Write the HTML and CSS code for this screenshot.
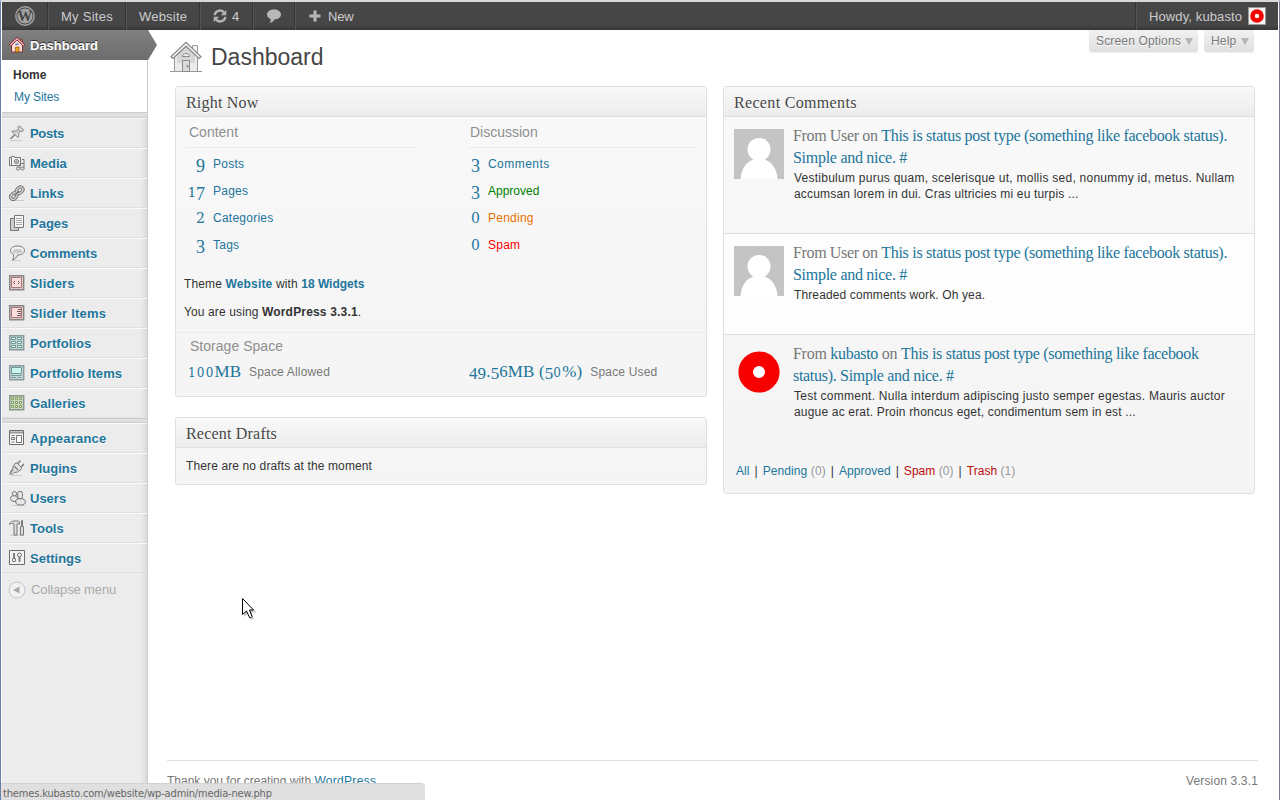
FILE: index.html
```html
<!DOCTYPE html>
<html lang="en">
<head>
<meta charset="utf-8">
<title>Dashboard</title>
<link rel="stylesheet" href="styles.css">
</head>
<body>
<div class="screen">
  <header class="bar">
    <div class="bar-item logo"><svg width="20" height="20" viewBox="0 0 20 20"><circle cx="10" cy="10" r="9.2" fill="none" stroke="#a2a2a2" stroke-width="1.4"/><circle cx="10" cy="10" r="7.6" fill="#a2a2a2"/><text x="10" y="15" text-anchor="middle" textLength="15" lengthAdjust="spacingAndGlyphs" class="logo-w">W</text></svg></div>
    <div class="bar-item sites">My Sites</div>
    <div class="bar-item website">Website</div>
    <div class="bar-item updates"><svg width="16" height="14" viewBox="0 0 16 14"><g fill="none" stroke="#b4b4b4" stroke-width="2.4"><path d="M2.6 6.2A5.3 5.3 0 0 1 11.8 3.4"/><path d="M13.4 7.8A5.3 5.3 0 0 1 4.2 10.6"/></g><path d="M14.3 0.8V6.2H8.8ZM1.7 13.2V7.8H7.2Z" fill="#b4b4b4"/></svg><span>4</span></div>
    <div class="bar-item bubble"><svg width="16" height="14" viewBox="0 0 16 14"><path d="M8 .5C12 .5 15 2.6 15 5.6S12 10.5 8.300 10.500C7.500 12.500 6 13.500 3.500 13.800C4.500 12.700 4.800 11.500 4.600 10C2.400 9.200 1 7.600 1 5.600C1 2.600 4 .5 8 .5Z" fill="#b8b8b8"/></svg></div>
    <div class="bar-item new"><svg width="12" height="12" viewBox="0 0 12 12"><path d="M6 .5V11.500M.5 6H11.500" stroke="#b8b8b8" stroke-width="3"/></svg><span>New</span></div>
    <div class="bar-item account"><span>Howdy, kubasto</span><svg width="18" height="18" viewBox="0 0 18 18"><rect x=".5" y=".5" width="17" height="17" fill="#f4f4f4" stroke="#999"/><circle cx="9" cy="9" r="4.500" fill="none" stroke="#f60000" stroke-width="4.600"/></svg></div>
  </header>

  <div class="body">
    <nav class="menu">
      <a class="current"><svg class="ic" viewBox="0 0 16 16"><path d="M11.500 2h2v4h-2z" fill="#d99" stroke="#633" stroke-width=".7"/><path d="M2.500 8L8 2.800 13.500 8V15H2.500Z" fill="#ffd9d5" stroke="#7d3434"/><path d="M.6 8.600L8 1.500 15.400 8.600" fill="none" stroke="#6e2630" stroke-width="2.600"/><path d="M1 8.200L8 1.700 15 8.200" fill="none" stroke="#f6b9b5" stroke-width="1.300"/><path d="M6.500 10h3.500v5H6.500z" fill="#e8a51c" stroke="#8b5217" stroke-width=".7"/><path d="M6.500 7.300h3" stroke="#347fc0" stroke-width="1.400"/></svg><span>Dashboard</span></a>
      <div class="submenu"><b>Home</b><a>My Sites</a></div>
      <div class="sep first"></div>
      <a class="row"><svg class="ic" viewBox="0 0 16 16"><path d="M1 15.500h12" stroke="#ccc"/><path d="M1.500 14L6 9.500" stroke="#777" stroke-width="1.300"/><path d="M3 6.500C4.500 5.500 6 6 7 6.500L9.500 3.800 9 2 10.500 1 14.500 5 13.500 6.300 11.700 6 9.300 8.500C10 10 10 11 9 12.500Z" fill="#e2e2e2" stroke="#777"/><path d="M8 7.500L11 4.500" stroke="#999"/></svg><span class="w0">Posts</span></a>
      <a class="row"><svg class="ic" viewBox="0 0 16 16"><g fill="none" stroke="#777"><path d="M.5 2.500h2v-1h3v1h6v8H.5Z" fill="#f4f4f4"/><path d="M2.500 3v7"/><circle cx="7.500" cy="6.500" r="2.200"/><circle cx="7.500" cy="6.500" r=".7"/><path d="M13 4.500h2v9M11 13V8.500h4"/><circle cx="9" cy="13.500" r="1.600"/><circle cx="13.500" cy="13.500" r="1.600"/></g></svg><span>Media</span></a>
      <a class="row"><svg class="ic" viewBox="0 0 16 16"><path d="M2 15.500h13" stroke="#ccc"/><g fill="none" stroke="#6f6f6f" stroke-width="3.200"><rect x="8.200" y="1.700" width="5" height="7" rx="2.500" transform="rotate(45 10.700 5.200)"/><rect x="2.300" y="7.700" width="5" height="7" rx="2.500" transform="rotate(45 4.800 11.200)"/></g><g fill="none" stroke="#d5d5d5" stroke-width="1.400"><rect x="8.200" y="1.700" width="5" height="7" rx="2.500" transform="rotate(45 10.700 5.200)"/><rect x="2.300" y="7.700" width="5" height="7" rx="2.500" transform="rotate(45 4.800 11.200)"/></g><path d="M5.500 10.500L10 6" stroke="#777" stroke-width="1.600"/></svg><span>Links</span></a>
      <a class="row"><svg class="ic" viewBox="0 0 16 16"><path d="M1.500 3.500h8v12h-8z" fill="#ccc" stroke="#777"/><path d="M5.500 .5h9v12h-9z" fill="#f7f7f7" stroke="#777"/><path d="M7 3.500h6M7 5.500h6M7 7.500h6M7 9.500h6" stroke="#aaa"/></svg><span>Pages</span></a>
      <a class="row"><svg class="ic" viewBox="0 0 16 16"><path d="M3 15.500h9" stroke="#ccc"/><path d="M8.500 1C12.500 1 15.500 2.800 15.500 5.500S12.500 10 8.500 10C8 12.500 6 14 3.500 15C4.700 13.500 5 12 4.700 9.400C2.700 8.600 1.500 7.200 1.500 5.500C1.500 2.800 4.500 1 8.500 1Z" fill="#f0f0f0" stroke="#777"/><ellipse cx="8.500" cy="6.300" rx="5" ry="2.200" fill="#ccc"/></svg><span>Comments</span></a>
      <a class="row"><svg class="ic" viewBox="0 0 16 16"><path d="M.7.7h14v14H.7z" fill="#e0c7c7" stroke="#878787" stroke-width="1.400"/><path d="M2.500 2.500h10v10h-10z" fill="#f9dcdc" stroke="#a77"/><path d="M6 6L4.500 7.500 6 9M9 6L10.500 7.500 9 9" fill="none" stroke="#755"/></svg><span class="w2">Sliders</span></a>
      <a class="row"><svg class="ic" viewBox="0 0 16 16"><path d="M.7.7h14v14H.7z" fill="#e0c7c7" stroke="#878787" stroke-width="1.400"/><path d="M2.500 2.500h10v10h-10z" fill="#f9dcdc" stroke="#a77"/><path d="M9 4.500h3M8 6.500h4M9 8.500h3M8 10.500h4" stroke="#755"/></svg><span class="w2">Slider Items</span></a>
      <a class="row"><svg class="ic" viewBox="0 0 16 16"><path d="M.7.7h14v14H.7z" fill="#bfd3d0" stroke="#8a9a9a" stroke-width="1.400"/><path d="M2.500 2.500h4v2h-4zM8.500 2.500h4v2h-4zM2.500 6.500h4v2h-4zM8.500 6.500h4v2h-4zM2.500 10.500h4v2h-4zM8.500 10.500h4v2h-4z" fill="#e8fbf6" stroke="#6b9995"/></svg><span class="w1">Portfolios</span></a>
      <a class="row"><svg class="ic" viewBox="0 0 16 16"><path d="M.7.7h14v14H.7z" fill="#c5d8d5" stroke="#8a9a9a" stroke-width="1.400"/><path d="M2.500 2.500h10v6h-10z" fill="#c9f5ec" stroke="#6b9995"/><path d="M2 10.500h11M2 12.500h5M8.500 12.500h4" stroke="#7b9f9c"/></svg><span class="w1">Portfolio Items</span></a>
      <a class="row last"><svg class="ic" viewBox="0 0 16 16"><path d="M.7.7h14v14H.7z" fill="#cbd5c2" stroke="#8d968a" stroke-width="1.400"/><path d="M2.500 2.500h2v2h-2zM6.500 2.500h2v2h-2zM10.500 2.500h2v2h-2zM2.500 6.500h2v2h-2zM6.500 6.500h2v2h-2zM10.500 6.500h2v2h-2zM2.500 10.500h2v2h-2zM6.500 10.500h2v2h-2zM10.500 10.500h2v2h-2z" fill="#eefbdd" stroke="#7ea05f"/></svg><span class="w1">Galleries</span></a>
      <div class="sep"></div>
      <a class="row"><svg class="ic" viewBox="0 0 16 16"><path d="M.5 .5h14v14H.5z" fill="#f4f4f4" stroke="#6c6c6c"/><path d="M1 2.500h13" stroke="#999" stroke-width="2"/><path d="M7.500 5.500h5v7h-5z" fill="#fff" stroke="#777"/><path d="M2.500 5.500h3M2.500 7.500h3v2h-3zM2.500 12h3" fill="none" stroke="#777"/></svg><span class="w2">Appearance</span></a>
      <a class="row"><svg class="ic" viewBox="0 0 16 16"><path d="M2 15.500h11" stroke="#ccc"/><path d="M.5 14.500C3 12.500.5 11 3.500 9.500" fill="none" stroke="#777" stroke-width="1.300"/><path d="M4 7L6 3.500 8 3 12.500 7.500 12 9.500 8.500 12 5 12.500 3 14.500 1.500 13 3.700 10.700Z" fill="#e4e4e4" stroke="#777"/><path d="M8.500 3.500L11.500 .7M12 7L15 4M5.500 6.500L9 10" stroke="#777" stroke-width="1.400"/></svg><span>Plugins</span></a>
      <a class="row"><svg class="ic wide-ic" viewBox="0 0 17 16"><path d="M3 15.500h13" stroke="#ccc"/><g fill="#e6e6e6" stroke="#777"><ellipse cx="5" cy="8.500" rx="3.600" ry="3"/><circle cx="5.500" cy="3.700" r="2.200"/><ellipse cx="11.500" cy="11.800" rx="4.800" ry="3.200"/><rect x="8.700" y="1.300" width="4.800" height="7.500" rx="2.400"/></g></svg><span>Users</span></a>
      <a class="row"><svg class="ic" viewBox="0 0 16 16"><path d="M1 15.500h14" stroke="#ccc"/><path d="M.5 4.500C1.500 1.500 3 1 5 1H9L10.500 2V4H8V15H5V4C3 3 2 3.500 .5 4.500Z" fill="#ddd" stroke="#777"/><path d="M12.500 .5h1v6h1v8.500h-3V6.500h1Z" fill="#ddd" stroke="#777"/></svg><span>Tools</span></a>
      <a class="row"><svg class="ic" viewBox="0 0 16 16"><path d="M.5 .5h15v14H.5z" fill="#f2f2f2" stroke="#6c6c6c"/><path d="M5 3v6M10.500 7v5" stroke="#777" stroke-width="1.800"/><circle cx="5" cy="10" r="1.700" fill="#fff" stroke="#666"/><circle cx="10.500" cy="5" r="1.900" fill="#fff" stroke="#666"/></svg><span>Settings</span></a>
      <a class="collapse"><svg width="18" height="18" viewBox="0 0 18 18"><circle cx="9" cy="9" r="8" fill="#f1f1f1" stroke="#c5c5c5"/><path d="M11.500 5.500V12.500L5 9Z" fill="#aaa"/></svg><span>Collapse menu</span></a>
    </nav>

    <main class="main">
      <div class="top">
        <svg class="house" width="32" height="32" viewBox="0 0 32 32"><path d="M0 30.500h32" stroke="#999"/><path d="M22.500 4.500h5v8h-5z" fill="#f4f4f4" stroke="#999"/><path d="M4.500 14L16 4 27.500 14V30.500H4.500Z" fill="#ececec" stroke="#999"/><path d="M7 13.500L16 6l9 7.500V22H7Z" fill="#d6d6d6"/><path d="M1 15.800L16 1.300 31 15.800 29 17.500 16 5.200 3 17.500Z" fill="#fafafa" stroke="#868686" stroke-width="1.200"/><path d="M12.500 15.500C12.500 11.500 19.500 11.500 19.500 15.500Z" fill="#eee" stroke="#888"/><path d="M12.500 19.500h7v11h-7z" fill="#dcdcdc" stroke="#888"/><path d="M16.500 24h2v2.500h-2z" fill="#999"/></svg>
        <h1>Dashboard</h1>
        <div class="tabs"><span class="tab opts">Screen Options<i></i></span><span class="tab help">Help<i></i></span></div>
      </div>

      <div class="cols">
        <div class="col">
          <section class="box">
            <h2>Right Now</h2>
            <div class="stats">
              <div class="stat left">
                <h3>Content</h3>
                <p><b class="desc">9</b><a>Posts</a></p>
                <p><b><span class="small">1</span><span class="low">7</span></b><a>Pages</a></p>
                <p><b class="small">2</b><a>Categories</a></p>
                <p><b class="desc">3</b><a>Tags</a></p>
              </div>
              <div class="stat right">
                <h3>Discussion</h3>
                <p><b class="desc">3</b><a class="wide">Comments</a></p>
                <p><b class="desc">3</b><a class="ok">Approved</a></p>
                <p><b class="small">0</b><a class="wait">Pending</a></p>
                <p><b class="small">0</b><a class="bad">Spam</a></p>
              </div>
            </div>
            <div class="versions">
              <p>Theme <a>Website</a> with <a class="n">18 Widgets</a></p>
              <p>You are using <strong>WordPress 3.3.1</strong>.</p>
            </div>
            <div class="storage">
              <h4>Storage Space</h4>
              <div class="space"><div class="allowed"><b><span class="small">100</span>MB</b><span>Space Allowed</span></div><div><b class="used"><span class="low">49</span>.<span class="low">5</span>6MB (<span class="low">5</span><span class="small">0</span>%)</b><span>Space Used</span></div></div>
            </div>
          </section>
          <section class="box drafts">
            <h2>Recent Drafts</h2>
            <p>There are no drafts at the moment</p>
          </section>
        </div>

        <section class="box comments">
          <h2 class="rc">Recent Comments</h2>
          <article class="one">
            <svg width="50" height="50" viewBox="0 0 50 50"><path d="M0 0h50v50H0z" fill="#c4c4c4"/><circle cx="25" cy="20.500" r="11.500" fill="#fff"/><path d="M6.500 50C7 41 12 32 20 30.500H30C38 32 43 41 43.500 50Z" fill="#fff"/></svg>
            <div><h5><span>From User on </span><a>This is status post type (something like facebook status).<br>Simple and nice. #</a></h5><p class="s1">Vestibulum purus quam, scelerisque ut, mollis sed, nonummy id, metus. Nullam</p><p class="s3">accumsan lorem in dui. Cras ultricies mi eu turpis ...</p></div>
          </article>
          <article class="two">
            <svg width="50" height="50" viewBox="0 0 50 50"><path d="M0 0h50v50H0z" fill="#c4c4c4"/><circle cx="25" cy="20.500" r="11.500" fill="#fff"/><path d="M6.500 50C7 41 12 32 20 30.500H30C38 32 43 41 43.500 50Z" fill="#fff"/></svg>
            <div><h5><span>From User on </span><a>This is status post type (something like facebook status).<br>Simple and nice. #</a></h5><p class="s2">Threaded comments work. Oh yea.</p></div>
          </article>
          <article class="three">
            <svg width="50" height="50" viewBox="0 0 50 50"><circle cx="25" cy="25" r="13.300" fill="#fff" stroke="#f60000" stroke-width="14.600"/></svg>
            <div><h5>From <a>kubasto</a> on <a class="t3">This is status post type (something like facebook<br>status). Simple and nice. #</a></h5><p class="s1">Test comment. Nulla interdum adipiscing justo semper egestas. Mauris auctor</p><p class="s3">augue ac erat. Proin rhoncus eget, condimentum sem in est ...</p></div>
          </article>
          <div class="filters"><a>All</a><i>|</i><a class="p">Pending <s>(0)</s></a><i>|</i><a>Approved</a><i>|</i><a class="red">Spam <s>(0)</s></a><i>|</i><a class="red">Trash <s>(1)</s></a></div>
        </section>
      </div>

      <footer class="foot"><p>Thank you for creating with <a>WordPress</a></p><p class="ver">Version 3.3.1</p></footer>
    </main>
  </div>

  <svg class="cursor" width="18" height="26" viewBox="0 0 18 26"><path d="M3 3V20L7 16.500 10 23 13 21.700 10.500 15.500H15.500Z" fill="#888" opacity=".45"/><path d="M1.500 1.500V17.500L5.500 14 8.500 20.500Q10 21.500 11 19.500L8.500 13H12.500Z" fill="#fff" stroke="#000"/></svg>
  <div class="status">themes.kubasto.com/website/wp-admin/media-new.php</div>
</div>
</body>
</html>
```

FILE: styles.css
```css
* { box-sizing: border-box; }
body { margin: 0; background: #fff; font: 12px/16px "Liberation Sans", Arial, sans-serif; color: #333; }
h1, h2, h3, h4, h5, p { margin: 0; font-weight: normal; }
a { color: #21759b; }
svg { display: block; flex: none; }
.screen { position: relative; width: 1280px; height: 800px; overflow: hidden; display: flex; flex-direction: column; border-top: 2px solid #d6d8da; border-left: 1px solid #6a7fa9; border-right: 1px solid #747c94; }

/* Toolbar */
.bar { height: 28px; flex: none; display: flex; margin: 0 1px; background: linear-gradient(#464646 0, #464646 82%, #373737 100%); color: #ccc; font-size: 13px; line-height: 28px; letter-spacing: .2px; }
.bar-item { display: flex; align-items: center; border-right: 1px solid #333; border-left: 1px solid #555; }
.bar-item span { padding-top: 1px; }
.logo { width: 46px; padding-left: 13px; border-left: 0; }
.logo-w { font: bold 15px "Liberation Serif", serif; fill: #464646; }
.sites { width: 78px; padding: 1px 0 0 12px; letter-spacing: .27px; }
.website { width: 74px; padding: 1px 0 0 12px; }
.updates { width: 53px; padding-left: 11px; gap: 4px; }
.bubble { width: 42px; padding-left: 12px; }
.new { flex: 1; padding-left: 13px; gap: 7px; letter-spacing: -.2px; }
.account { width: 142px; padding-left: 12px; gap: 6px; border-right: 0; letter-spacing: .11px; }

.body { flex: 1; min-height: 0; display: flex; }

/* Admin menu */
.menu { width: 146px; flex: none; margin-left: 1px; border-right: 1px solid #ccc; background: linear-gradient(to left, #d8d8d8 0, #e6e6e6 4px, #ececec 8px); font-size: 13px; font-weight: bold; }
.ic { width: 16px; height: 16px; }
.wide-ic { width: 17px; margin-right: -1px; }
.current { position: relative; display: flex; align-items: center; gap: 5px; height: 30px; padding-left: 7px; color: #fff; background: linear-gradient(#808080, #6d6d6d); text-shadow: 0 -1px 0 #333; }
.current::after { content: ""; position: absolute; left: 145px; top: 0; width: 10px; height: 30px; background: linear-gradient(#808080, #6d6d6d); clip-path: polygon(0 0, 10% 0, 100% 50%, 10% 100%, 0 100%); }
.current span { padding-top: 1px; }
.submenu { height: 52px; display: flex; flex-direction: column; padding: 4px 0 0 11px; background: #fff; font-size: 12px; line-height: 22px; }
.submenu a { padding-left: 1px; font-weight: normal; letter-spacing: -.1px; }
.sep { height: 5px; background: #dfdfdf; border-top: 1px solid #ccc; border-bottom: 1px solid #ccc; }
.sep.first { height: 6px; }
.row { height: 30px; display: flex; align-items: center; gap: 5px; padding-left: 7px; border-top: 1px solid #f9f9f9; border-bottom: 1px solid #dfdfdf; text-shadow: 0 1px 0 #fff; }
.row span { padding-top: 2px; }
.w0 { letter-spacing: -.3px; }
.w1 { letter-spacing: .07px; }
.w2 { letter-spacing: .2px; }
.collapse { display: flex; align-items: center; gap: 5px; height: 34px; padding-left: 6px; color: #aaa; font-weight: normal; letter-spacing: -.12px; }

/* Content */
.main { flex: 1; padding: 0 21px 0 19px; display: flex; flex-direction: column; }
.top { height: 56px; display: flex; align-items: flex-start; padding-left: 2px; }
.house { margin: 11px 0 0 1px; }
h1 { margin: 11px 0 0 9px; font-size: 23px; line-height: 32px; color: #464646; flex: 1; }
.tabs { display: flex; gap: 6px; margin-right: 4px; color: #777; }
.tab { display: flex; align-items: center; justify-content: space-between; height: 22px; padding: 0 5px 0 7px; border-radius: 0 0 3px 3px; background: linear-gradient(#f1f1f1, #dfdfdf); letter-spacing: .16px; text-shadow: 0 1px 0 #fff; box-shadow: 0 1px 0 #f0f0f0; }
.tab i { border: 4px solid transparent; border-top: 7px solid #b5b5b5; border-bottom: 0; }
.opts { width: 109px; }
.help { width: 50px; }

.cols { display: flex; gap: 16px; padding-left: 8px; align-items: flex-start; }
.col { width: 532px; }
.box { width: 532px; border: 1px solid #dfdfdf; border-radius: 3px; background: linear-gradient(#f9f9f9, #f5f5f5 80%); }
h2 { height: 30px; padding: 1px 10px 0; border-bottom: 1px solid #dfdfdf; border-radius: 3px 3px 0 0; background: linear-gradient(#f9f9f9, #ececec); font: 16px/30px "Liberation Serif", serif; letter-spacing: .2px; color: #464646; text-shadow: 0 1px 0 #fff; }
h2.rc { letter-spacing: .33px; }

.stats { display: flex; padding-left: 10px; height: 158px; }
.left { width: 281px; }
.right { width: 230px; }
h3, h4 { font-size: 14px; color: #8f8f8f; }
h3 { width: 230px; height: 31px; padding-left: 3px; line-height: 31px; border-bottom: 1px solid #ececec; margin-bottom: 3px; }
.stat p { display: flex; gap: 8px; height: 27px; line-height: 27px; letter-spacing: .25px; }
.stat b, .space b { font: 18px/27px "Liberation Serif", serif; color: #21759b; }
.stat b { width: 19px; text-align: right; letter-spacing: 0; }
.right b { width: 13px; }
.stat b.desc { padding-top: 2px; }
/* Old-style figures: short 0, 1, 2 and lowered 3, 4, 5, 7, 9 */
.small, .stat b.small { font-family: "DejaVu Serif", serif; }
.stat b.small, .stat span.small { font-size: 13px; }
.stat b.small { font-size: 14px; }
.space .small { font-size: 12px; letter-spacing: 1.2px; }
.low { vertical-align: -3px; line-height: 1; }
.space .low { vertical-align: -2px; }
.wide { letter-spacing: .45px; }
.ok { color: green; letter-spacing: 0; }
.wait { color: #e66f00; }
.bad { color: red; }

.versions { height: 62px; padding: 0 8px; letter-spacing: .12px; }
.versions p { line-height: 28px; height: 28px; margin-top: -5px; }
.versions p + p { margin-top: 0; }
.versions a, .versions strong { font-weight: bold; letter-spacing: .18px; }
.versions .n { letter-spacing: 0; }
.storage { height: 64px; margin: 0 -2px; padding: 4px 0 0 14px; border-top: 1px solid #ececec; }
h4 { padding-left: 2px; line-height: 18px; letter-spacing: .03px; }
.space { display: flex; color: #777; letter-spacing: .18px; }
.space > div { display: flex; gap: 8px; height: 33px; line-height: 35px; }
.space b { font-size: 17px; line-height: 34px; letter-spacing: 0; }
.space .used { letter-spacing: .12px; }
.allowed { width: 281px; }

.drafts { margin-top: 20px; height: 68px; }
.drafts p { padding: 10px; letter-spacing: .12px; }

.comments { height: 408px; }
article { display: flex; gap: 9px; padding: 12px 10px 0; border-bottom: 1px solid #dfdfdf; }
.one { height: 117px; }
.two { height: 101px; background: #fdfdfd; }
.three { height: 120px; border: 0; }
article div { margin-top: -4px; white-space: nowrap; }
h5 { font: 16px/22px "Liberation Serif", serif; letter-spacing: -.28px; color: #777; }
h5 span { letter-spacing: -.36px; }
h5 .t3 { letter-spacing: -.3px; }
article p { padding-left: 1px; }
.s1 { letter-spacing: .25px; }
.s2 { letter-spacing: .12px; }
.s3 { letter-spacing: .18px; }
article p:first-of-type { margin-top: 1px; }
.filters { display: flex; gap: 5px; padding: 8px 12px; letter-spacing: .04px; }
.filters i { font-style: normal; }
.filters s { text-decoration: none; color: #999; }
.filters .p { letter-spacing: .1px; }
.filters .red { color: #bc0b0b; }

.foot { height: 40px; margin-top: auto; display: flex; justify-content: space-between; padding-top: 12px; border-top: 1px solid #dfdfdf; color: #777; }
.foot a { text-decoration: underline; letter-spacing: .3px; }
.ver { letter-spacing: .15px; }

/* Overlays */
.cursor { position: absolute; left: 240px; top: 595px; }
.status { position: absolute; left: 0; bottom: 0; width: 424px; height: 17px; padding: 2px 2px 0; border-radius: 0 4px 0 0; border-top: 1px solid #d2d2d2; background: #dfdfdf; color: #666; font: 11px/15px "DejaVu Sans Condensed", sans-serif; letter-spacing: -.16px; }
```
